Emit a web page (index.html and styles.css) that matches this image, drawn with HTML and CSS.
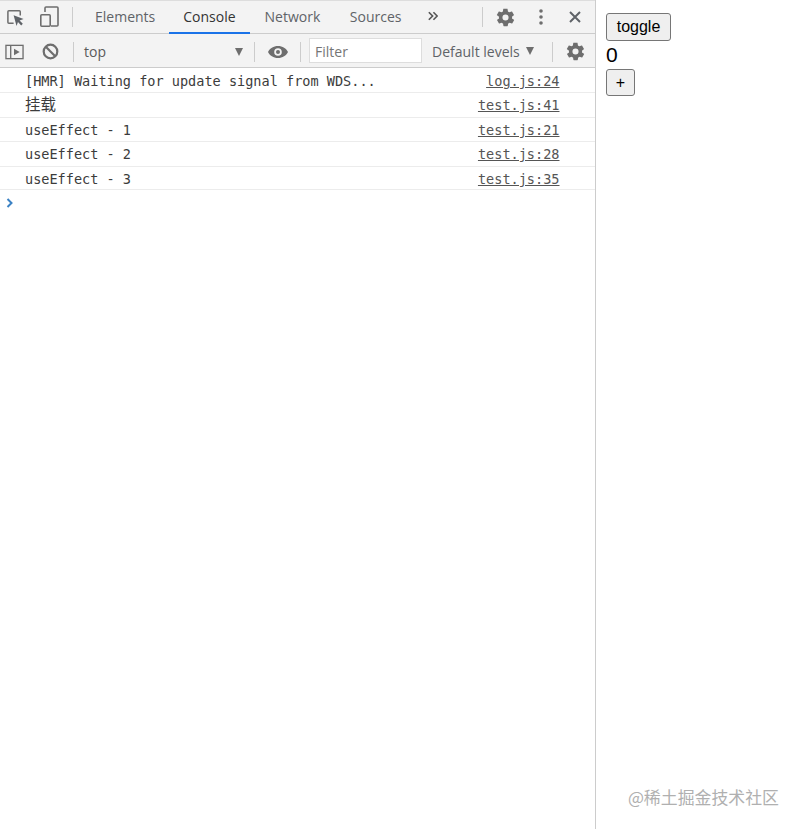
FILE: index.html
```html
<!DOCTYPE html>
<html lang="zh">
<head>
<meta charset="utf-8">
<title>Console</title>
<link rel="stylesheet" href="styles.css">
</head>
<body>
<div class="devtools">
  <div class="toolbar tabs-bar">
    <svg class="icon icon-inspect" width="19" height="19" viewBox="0 0 20 20"><path d="M8 16H3a1 1 0 0 1-1-1V4a1 1 0 0 1 1-1h11a1 1 0 0 1 1 1v4" fill="none" stroke="#6e6e6e" stroke-width="1.6"/><path d="M8 7.500l10.500 4-4.200 1.600 3.400 3.600-1.700 1.600-3.400-3.600-1.500 4.200z" fill="#5f6368"/></svg>
    <svg class="icon icon-device" width="20" height="22" viewBox="0 0 20 22"><path d="M6 6V2a1 1 0 0 1 1-1h11a1 1 0 0 1 1 1v17a1 1 0 0 1-1 1h-6" fill="none" stroke="#6e6e6e" stroke-width="1.6"/><rect x="1.8" y="8.8" width="9.4" height="11.4" rx="1" fill="none" stroke="#6e6e6e" stroke-width="1.6"/></svg>
    <span class="sep sep-tabs"></span>
    <span class="tab tab-elements">Elements</span>
    <span class="tab tab-active">Console</span>
    <span class="tab tab-network">Network</span>
    <span class="tab tab-sources">Sources</span>
    <svg class="icon icon-more" width="10" height="10" viewBox="0 0 12 12"><path d="M1 1.500L5.500 6 1 10.500M6.500 1.500L11 6 6.500 10.500" fill="none" stroke="#555" stroke-width="2"/></svg>
    <span class="spacer"></span>
    <span class="sep sep-right"></span>
    <svg class="icon icon-gear" width="21" height="21" viewBox="0 0 24 24"><path fill="#6e6e6e" fill-rule="evenodd" d="M19.4 13c.1-.3.1-.7.1-1s0-.7-.1-1l2.100-1.600c.2-.2.2-.4.1-.6l-2-3.500c-.1-.2-.4-.3-.6-.2l-2.500 1c-.5-.4-1.100-.7-1.700-1l-.4-2.600c0-.3-.2-.5-.5-.5h-4c-.3 0-.5.2-.5.5l-.4 2.600c-.6.3-1.200.6-1.700 1l-2.500-1c-.2-.1-.5 0-.6.2l-2 3.500c-.1.2-.1.4.1.6L4.600 11c-.1.3-.1.7-.1 1s0 .7.1 1l-2.100 1.600c-.2.2-.2.4-.1.6l2 3.500c.1.2.4.3.6.2l2.500-1c.5.4 1.100.7 1.700 1l.4 2.600c0 .3.2.5.5.5h4c.3 0 .5-.2.5-.5l.4-2.600c.6-.3 1.200-.6 1.700-1l2.500 1c.2.1.5 0 .6-.2l2-3.500c.1-.2.1-.4-.1-.6zM12 15.500a3.500 3.500 0 1 1 0-7 3.500 3.500 0 0 1 0 7z"/></svg>
    <svg class="icon icon-dots" width="4" height="16" viewBox="0 0 4 16"><circle cx="2" cy="2" r="1.800" fill="#6e6e6e"/><circle cx="2" cy="8" r="1.800" fill="#6e6e6e"/><circle cx="2" cy="14" r="1.800" fill="#6e6e6e"/></svg>
    <svg class="icon icon-close" width="12" height="12" viewBox="0 0 12 12"><path d="M1 1l10 10M11 1L1 11" stroke="#5f6368" stroke-width="2" fill="none"/></svg>
  </div>
  <div class="toolbar filter-bar">
    <svg class="icon icon-sidebar" width="19" height="16" viewBox="0 0 20 16"><rect x="1" y="1" width="18" height="14" fill="none" stroke="#6e6e6e" stroke-width="1.400"/><path d="M6 1v14" stroke="#6e6e6e" stroke-width="1.400"/><path d="M9.500 4.500l6 3.500-6 3.500z" fill="#6e6e6e"/></svg>
    <svg class="icon icon-block" width="17" height="17" viewBox="0 0 17 17"><circle cx="8.500" cy="8.500" r="6.800" fill="none" stroke="#6e6e6e" stroke-width="2.200"/><path d="M3.800 3.800l9.400 9.400" stroke="#6e6e6e" stroke-width="2.200"/></svg>
    <span class="sep sep-ctx"></span>
    <div class="context"><span>top</span><span class="caret"></span></div>
    <span class="sep sep-eye"></span>
    <svg class="icon icon-eye" width="20" height="14" viewBox="0 0 20 14"><path fill="#6e6e6e" fill-rule="evenodd" d="M10 1C5.500 1 1.700 3.500 0 7c1.700 3.500 5.500 6 10 6s8.300-2.500 10-6c-1.700-3.500-5.500-6-10-6zm0 9.800a3.800 3.800 0 1 1 0-7.600 3.800 3.800 0 0 1 0 7.600zM10 5a2 2 0 1 0 0 4 2 2 0 0 0 0-4z"/></svg>
    <span class="sep sep-filter"></span>
    <div class="filter">Filter</div>
    <div class="levels"><span>Default levels</span><span class="caret caret-levels"></span></div>
    <span class="sep sep-gear"></span>
    <svg class="icon icon-gear2" width="21" height="21" viewBox="0 0 24 24"><path fill="#6e6e6e" fill-rule="evenodd" d="M19.400 13c.1-.3.1-.7.1-1s0-.7-.1-1l2.100-1.600c.2-.2.2-.4.1-.6l-2-3.500c-.1-.2-.4-.3-.6-.2l-2.500 1c-.5-.4-1.100-.7-1.700-1l-.4-2.600c0-.3-.2-.5-.5-.5h-4c-.3 0-.5.2-.5.5l-.4 2.600c-.6.3-1.200.6-1.700 1l-2.500-1c-.2-.1-.5 0-.6.2l-2 3.500c-.1.2-.1.4.1.6L4.600 11c-.1.3-.1.7-.1 1s0 .7.1 1l-2.100 1.600c-.2.2-.2.4-.1.6l2 3.500c.1.2.4.3.6.2l2.500-1c.5.4 1.100.7 1.700 1l.4 2.600c0 .3.2.5.5.5h4c.3 0 .5-.2.5-.5l.4-2.600c.6-.3 1.200-.6 1.700-1l2.500 1c.2.1.5 0 .6-.2l2-3.500c.1-.2.1-.4-.1-.6zM12 15.500a3.500 3.500 0 1 1 0-7 3.500 3.500 0 0 1 0 7z"/></svg>
  </div>
  <div class="log">
    <div class="row row-1"><span>[HMR] Waiting for update signal from WDS...</span><a class="src">log.js:24</a></div>
    <div class="row row-2"><span class="cjk">挂载</span><a class="src src-2">test.js:41</a></div>
    <div class="row row-3"><span>useEffect - 1</span><a class="src">test.js:21</a></div>
    <div class="row row-4"><span>useEffect - 2</span><a class="src">test.js:28</a></div>
    <div class="row row-5"><span>useEffect - 3</span><a class="src">test.js:35</a></div>
    <div class="prompt"><svg width="8" height="10" viewBox="0 0 8 10"><path d="M1.500 1l4 4-4 4" fill="none" stroke="#3b82c4" stroke-width="2"/></svg></div>
  </div>
</div>
<main class="app">
  <button class="btn btn-toggle">toggle</button>
  <div class="count">0</div>
  <button class="btn btn-plus">+</button>
</main>
<div class="watermark">@稀土掘金技术社区</div>
</body>
</html>
```
FILE: styles.css
```css
* { box-sizing: border-box; }
html, body { height: 100%; }
body {
  margin: 0;
  display: flex;
  height: 829px;
  overflow: hidden;
  background: #fff;
  font-family: "Open Sans", "Noto Sans", sans-serif;
}
.devtools {
  width: 596px;
  flex: none;
  border-right: 1px solid #ccc;
  display: flex;
  flex-direction: column;
}
.toolbar {
  display: flex;
  align-items: center;
  background: #f3f3f3;
  border-bottom: 1px solid #ccc;
  color: #5a5a5a;
  font-size: 14px;
}
.tabs-bar { height: 34px; border-top: 1px solid #ddd; }
.filter-bar { height: 34px; padding-top: 2px; }
.icon { flex: none; display: block; }
.sep { flex: none; width: 1px; height: 20px; background: #ccc; }
.icon-inspect { margin-left: 5.500px; margin-top: 0; }
.icon-device { margin-left: 14.500px; }
.sep-tabs { margin-left: 13px; }
.tab {
  height: 33px;
  line-height: 32px;
  padding: 0 14px;
  border-bottom: 2px solid transparent;
  color: #5f6368;
}
.tab-elements { margin-left: 8px; }
.tab-active { color: #333; border-bottom-color: #1a73e8; }
.tab-network { margin-left: 1px; }
.tab-sources { margin-left: 1.500px; }
.icon-more { margin-left: 13px; margin-top: -2px; }
.spacer { flex: 1; }
.icon-gear { margin-left: 12px; }
.icon-dots { margin-left: 23px; }
.icon-close { margin-left: 26px; margin-right: 14px; }
.icon-sidebar { margin-left: 5px; }
.icon-block { margin-left: 18px; }
.sep-ctx { margin-left: 14px; }
.context {
  width: 170px;
  margin-left: 10px;
  display: flex;
  justify-content: space-between;
  align-items: center;
  padding-right: 11px;
  color: #5a5a5a;
}
.caret {
  width: 0;
  height: 0;
  border-left: 4.500px solid transparent;
  border-right: 4.500px solid transparent;
  border-top: 8px solid #6e6e6e;
}
.icon-eye { margin-left: 13px; }
.sep-filter { margin-left: 12px; }
.filter {
  width: 113px;
  height: 25px;
  line-height: 25px;
  margin-left: 8px;
  margin-top: -2px;
  padding-left: 5px;
  background: #fff;
  border: 1px solid #ddd;
  color: #757575;
}
.levels {
  margin-left: 10px;
  display: flex;
  align-items: center;
  gap: 6px;
  color: #5f6368;
}
.caret-levels { margin-top: -1px; }
.sep-gear { margin-left: 18px; }
.icon-gear2 { margin-left: 12px; }
.log {
  flex: 1;
  font-family: "DejaVu Sans Mono", "Noto Sans CJK SC", monospace;
  font-size: 13.550px;
  color: #3c3c3c;
}
.row {
  display: flex;
  justify-content: space-between;
  align-items: center;
  padding: 0 35.500px 0 25px;
  border-bottom: 1px solid #ececec;
}
.row-1 { height: 25px; padding-top: 2px; }
.row-2 { height: 25px; }
.row-3 { height: 24px; padding-top: 1px; }
.row-4 { height: 25px; }
.row-5 { height: 23px; padding-top: 2px; }
.cjk { font-family: "Noto Sans CJK SC", sans-serif; font-size: 15.500px; margin-bottom: 5px; }
.src { color: #555; text-decoration: underline; }
.prompt { padding: 3px 0 0 6px; }
.prompt svg { display: block; margin-top: 5px; }
.app { flex: 1; padding: 13px 0 0 10px; display: flex; flex-direction: column; align-items: flex-start; }
.btn {
  font-family: "Liberation Sans", Arial, sans-serif;
  background: #efefef;
  border: 1px solid #767676;
  border-radius: 3px;
  color: #000;
  padding: 0;
}
.btn-toggle { width: 65px; height: 28px; font-size: 16px; }
.count { font-family: "Liberation Sans", Arial, sans-serif; font-size: 21px; line-height: 28px; color: #000; }
.btn-plus { width: 29px; height: 27px; font-size: 16px; }
.watermark {
  position: absolute;
  right: 22px;
  bottom: 22px;
  font-family: "Noto Sans CJK SC", sans-serif;
  font-size: 16.900px;
  line-height: 20px;
  color: #b0b0b0;
}
```
